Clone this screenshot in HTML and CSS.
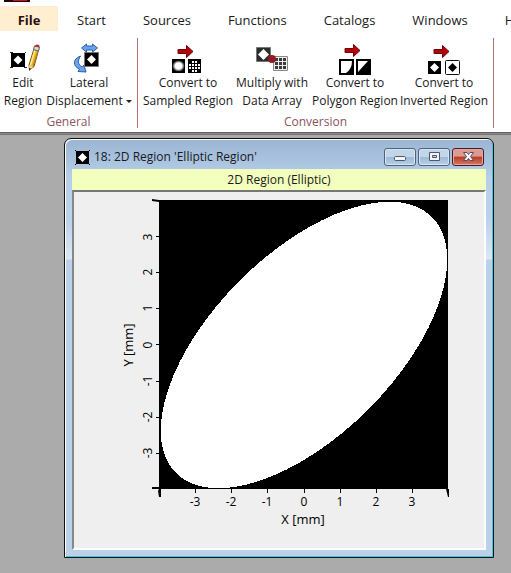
FILE: index.html
```html
<!DOCTYPE html>
<html lang="en">
<head>
<meta charset="utf-8">
<title>2D Region</title>
<link rel="stylesheet" href="styles.css">
</head>
<body>
<header class="ribbon">
  <svg class="app-logo" width="26" height="2" viewBox="0 0 26 2" aria-hidden="true"><path d="M0 0h26v2H0z" fill="#210305"/><path d="M9 0h14v1H9z" fill="#d01020"/></svg>
  <nav class="tabs">
    <a class="tab tab-active" href="#file">File</a>
    <a class="tab" href="#start">Start</a>
    <a class="tab" href="#sources">Sources</a>
    <a class="tab" href="#functions">Functions</a>
    <a class="tab" href="#catalogs">Catalogs</a>
    <a class="tab" href="#windows">Windows</a>
    <a class="tab" href="#help">Help</a>
  </nav>
  <div class="groups">
    <section class="group group-general">
      <div class="tools">
        <button class="tool tool-edit" type="button">
          <svg width="42" height="30" viewBox="0 0 42 30" aria-hidden="true">
            <path d="M9 9h14v14H9z"/><path d="M8 8.500h3M22 23.500h3M8 23.500h3M23 8.500h1" stroke="#222"/><path d="M16 11.500l4.500 4.500-4.500 4.500-4.500-4.500z" fill="#fff"/>
            <g transform="translate(1 -2)"><path d="M31.500 5l4.500 1.500-5 18-4.500 3.500-.5-5z" fill="#e9b52b" stroke="#785018"/><path d="M32.500 6l-5 17" stroke="#fff08a" stroke-width="1.500"/><path d="M35 9l-5 15" stroke="#c07818"/><path d="M26 23l4 2-3.500 3z" fill="#f1d4a2"/><path d="M26 26l2 .5-2 2.500z" fill="#222"/><path d="M31.500 4l5 1-1 4-5-1.500z" fill="#d8ddd8" stroke="#587060"/><path d="M32 3.500q2-2 4.500 0l-.3 2-4.500-1z" fill="#b83232"/></g>
          </svg>
          <span>Edit<br>Region</span>
        </button>
        <button class="tool tool-lateral" type="button">
          <svg width="42" height="30" viewBox="0 0 42 30" aria-hidden="true">
            <path d="M13.500 4l5-4v2h6v-2l5 4-5 4v-2h-6v2z" fill="#6ba2ee" stroke="#285fae"/>
            <path d="M12.500 12c-8 3-8 10-1 13l-1.500 2.500 8 .5-2-7-1.500 2c-5-2-5-6-2-11z" fill="#6ba2ee" stroke="#285fae"/>
            <path d="M16.500 8.500h14v14h-14z" stroke="#777"/><path d="M23.500 11l4.500 4.500-4.500 4.500-4.500-4.500z" fill="#fff"/>
          </svg>
          <span>Lateral<br>Displacement <i class="caret"></i></span>
        </button>
      </div>
      <h2>General</h2>
    </section>
    <section class="group group-conversion">
      <div class="tools">
        <button class="tool tool-sampled" type="button">
          <svg width="42" height="30" viewBox="0 0 42 30" aria-hidden="true">
            <defs><radialGradient id="spot"><stop offset=".55" stop-color="#fff"/><stop offset="1" stop-color="#222"/></radialGradient></defs>
            <path d="M11 5.500h8.500v-4l6.500 6-6.500 6v-4H11z" fill="#b1050b" stroke="#730408"/>
            <path d="M5 15h13v14H5zM21 15h13v14H21z"/><ellipse cx="11.500" cy="22" rx="6" ry="5.500" fill="url(#spot)"/>
            <path d="M25 17h2v2h-2zm3 0h2v2h-2zM22 20h2v2h-2zm3 0h2v2h-2zm3 0h2v2h-2zm3 0h2v2h-2zM22 23h2v2h-2zm3 0h2v2h-2zm3 0h2v2h-2zm3 0h2v2h-2zM25 26h2v2h-2zm3 0h2v2h-2z" fill="#fff"/>
          </svg>
          <span>Convert to<br>Sampled Region</span>
        </button>
        <button class="tool tool-multiply" type="button">
          <svg width="42" height="30" viewBox="0 0 42 30" aria-hidden="true">
            <path d="M5.500 3.500h14v14h-14z" fill="#2b2d2d" stroke="#777"/><path d="M12.500 5l5.500 5.500-5.500 5.500L7 10.500z" fill="#fff"/>
            <path d="M22.500 12.500h14v14h-14z" fill="#eee" stroke="#888"/><path d="M24 14h3v3h-3zm4 0h3v3h-3zm4 0h3v3h-3zM24 18h3v3h-3zm4 0h3v3h-3zm4 0h3v3h-3zM24 22h3v3h-3zm4 0h3v3h-3zm4 0h3v3h-3z" fill="#3b3b3b"/>
            <circle cx="21" cy="15" r="4" fill="#901c22"/>
          </svg>
          <span>Multiply with<br>Data Array</span>
        </button>
        <button class="tool tool-polygon" type="button">
          <svg width="42" height="30" viewBox="0 0 42 30" aria-hidden="true">
            <path d="M11 4.500h8.500v-4l6.500 6-6.500 6v-4H11z" fill="#b1050b" stroke="#730408"/>
            <path d="M5 15h15v16H5zM22 15h15v16H22z"/><path d="M7 17h11q0 8-6 12H7zM24 17h10L24 28z" fill="#fff"/>
          </svg>
          <span>Convert to<br>Polygon Region</span>
        </button>
        <button class="tool tool-inverted" type="button">
          <svg width="42" height="30" viewBox="0 0 42 30" aria-hidden="true">
            <path d="M11 5.500h8.500v-4l6.500 6-6.500 6v-4H11z" fill="#b1050b" stroke="#730408"/>
            <path d="M5 17h13v13H5z"/><path d="M11.500 19l4.500 4.500-4.500 4.500L7 23.500z" fill="#fff"/>
            <rect x="22.500" y="16.500" width="14" height="14" rx="1" fill="#fff" stroke="#111"/><path d="M29.500 19l4.500 4.500-4.500 4.500-4.500-4.500z"/>
          </svg>
          <span>Convert to<br>Inverted Region</span>
        </button>
      </div>
      <h2>Conversion</h2>
    </section>
  </div>
</header>
<main class="workspace">
  <article class="window">
    <div class="titlebar">
      <svg width="15" height="15" viewBox="0 0 15 15" aria-hidden="true"><path d="M0 0h1v1h13V0h1v1h-1v13h1v1h-1v-1H1v1H0v-1h1V1H0z"/><path d="M7.500 3L12 7.500 7.500 12 3 7.500z" fill="#fff"/></svg>
      <h1>18: 2D Region 'Elliptic Region'</h1>
      <button class="control" type="button" aria-label="Minimize"><svg width="28" height="14" viewBox="0 0 28 14"><rect x="8.500" y="6.500" width="11" height="4" rx="1" fill="#f4f4f4" stroke="#4c5870"/></svg></button>
      <button class="control" type="button" aria-label="Maximize"><svg width="28" height="14" viewBox="0 0 28 14"><path d="M9.500 2.500h10v8h-10zM12.500 5.500v2h4v-2z" fill="#f4f4f4" fill-rule="evenodd" stroke="#4c5870"/></svg></button>
      <button class="control control-close" type="button" aria-label="Close"><svg width="28" height="14" viewBox="0 0 28 14"><path d="M9.500 2.500h3.500l1.500 2 1.500-2h3.500l-3 4 3 4H16l-1.500-2-1.500 2H9.500l3-4z" fill="#f8f8f8" stroke="#53505f"/></svg></button>
    </div>
    <p class="caption">2D Region (Elliptic)</p>
    <div class="panel">
      <svg class="chart" viewBox="0 0 410 356" role="img" aria-label="Elliptic region, X and Y in millimetres">
        <path d="M85 8h289v289H85z" shape-rendering="crispEdges"/>
        <ellipse cx="230" cy="153" rx="181" ry="91" transform="rotate(-45 230 153)" fill="#fff" shape-rendering="crispEdges"/>
        <path d="M121.500 297v4M157.500 297v4M193.500 297v4M230.500 297v4M266.500 297v4M302.500 297v4M338.500 297v4M82 44.500h3M82 80.500h3M82 116.500h3M82 152.500h3M82 189.500h3M82 225.500h3M82 261.500h3" stroke="#000"/>
        <path d="M78 7l7 1v2l-7-1zM78 295h9v10h-2l-1-6 1-2h-7zM372 297h3v8h-1z"/>
        <g class="labels">
          <text x="121" y="314">-3</text><text x="157" y="314">-2</text><text x="193" y="314">-1</text><text x="230" y="314">0</text><text x="266" y="314">1</text><text x="302" y="314">2</text><text x="338" y="314">3</text>
          <text class="axis-title" x="229" y="332">X [mm]</text>
          <g transform="rotate(-90)">
            <text x="-45" y="78">3</text><text x="-80" y="78">2</text><text x="-116" y="78">1</text><text x="-153" y="78">0</text><text x="-189" y="78">-1</text><text x="-225" y="78">-2</text><text x="-261" y="78">-3</text>
            <text class="axis-title" x="-153" y="59">Y [mm]</text>
          </g>
        </g>
      </svg>
    </div>
  </article>
</main>
</body>
</html>
```
FILE: styles.css
```css
* { box-sizing: border-box; }
body {
  margin: 0;
  min-height: 100vh;
  display: flex;
  flex-direction: column;
  overflow: hidden;
  background: #ababab;
  color: #1a1a1a;
  font: 12px/18px "Open Sans", "Noto Sans", sans-serif;
}
h1, h2, p { margin: 0; font-size: 12px; font-weight: 400; }
button { font: inherit; color: inherit; border: 0; padding: 0; background: none; }
svg { display: block; }

.ribbon { background: #fff; border-bottom: 1px solid #6e5c60; }
.app-logo { margin-left: 4px; }
.tabs { display: flex; gap: 1px; padding-top: 4px; font-size: 13px; overflow: hidden; }
.tab { flex: none; padding: 2px 18px 0; height: 25px; line-height: 24px; color: inherit; text-decoration: none; }
.tab-active { min-width: 58px; padding: 2px 0 0; text-align: center; background: #ffefd0; font-weight: 700; color: #2c1010; }

.groups { display: flex; padding: 7px 0 4px; }
.group { flex: none; height: 90px; border-right: 1px solid #b97070; }
.group-general { width: 138px; }
.group-conversion { width: 356px; }
.tools { display: flex; padding-top: 6px; }
.tool { flex: none; display: flex; flex-direction: column; align-items: center; white-space: nowrap; }
.tool svg { overflow: visible; }
.tool-edit { width: 46px; }
.tool-lateral { width: 86px; }
.tool-sampled { width: 100px; }
.tool-multiply { width: 68px; }
.tool-polygon { width: 98px; }
.tool-inverted { width: 80px; }
.caret { display: inline-block; margin-bottom: 2px; border: 3px solid transparent; border-top-color: #222; border-bottom: 0; }
.group h2 { text-align: center; line-height: 18px; color: #8a5560; margin-top: 3px; }

.workspace { flex: 1; padding: 4px 17px 14px 64px; border-top: 1px solid #888; box-shadow: inset 0 1px #777; }
.window {
  border: 1px solid #111;
  border-radius: 7px 7px 0 0;
  padding: 0 7px 7px;
  background: linear-gradient(#9ab5d3, #b7cfea 40px, #bad2ec 80px, #dce7f3 120px, #b9d1ea 121px);
  box-shadow: inset 1px 1px #fff, inset -1px -1px #32cbe4;
}
.titlebar { display: flex; align-items: center; height: 30px; padding: 6px 2px 0 3px; gap: 2px; }
.titlebar h1 { flex: 1; margin-left: 2px; white-space: nowrap; }
.control {
  width: 32px;
  height: 18px;
  padding: 1px;
  border: 1px solid #52627b;
  border-radius: 3px;
  background: linear-gradient(#c2d5e9 50%, #9db9d7 50%, #b8d0e8);
  box-shadow: inset 0 0 0 1px #d7e5f3;
}
.control-close { border-color: #4b1720; background: linear-gradient(#dc9b90 45%, #b83a25 50%, #d27967); box-shadow: inset 0 0 0 1px #e2aaa0; }
.caption { background: #f2ffbd; height: 21px; line-height: 22px; text-align: center; }
.panel { background: #efefef; border: 2px solid #fff; border-top-color: #777; border-left-color: #888; }
.chart { width: 100%; height: auto; }
.labels { font-size: 12px; text-anchor: middle; }
.axis-title { font-size: 13px; }
```
